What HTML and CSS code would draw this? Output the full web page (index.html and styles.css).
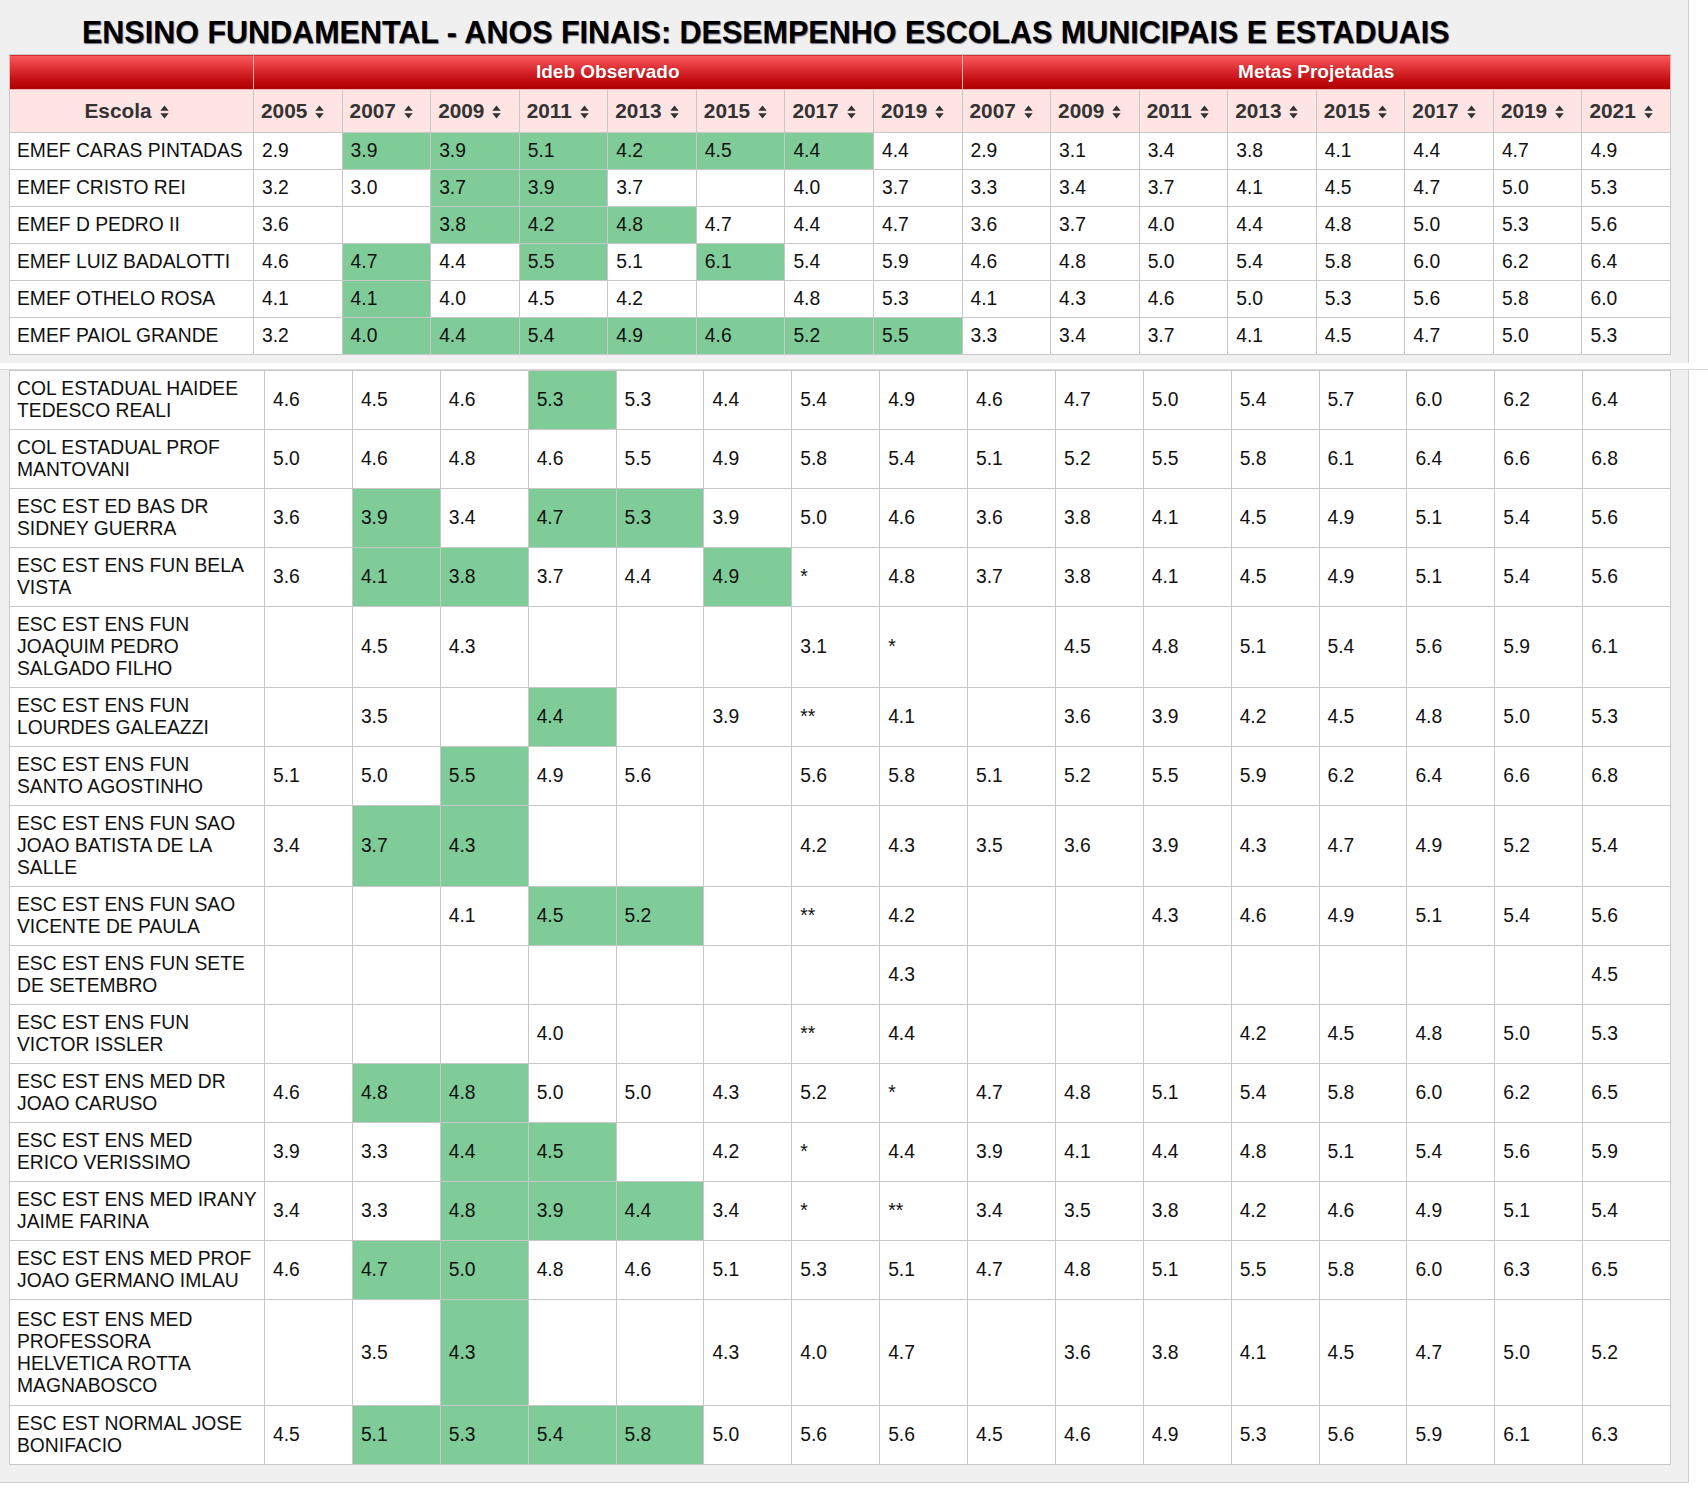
FILE: index.html
```html
<!DOCTYPE html>
<html lang="pt-BR">
<head>
<meta charset="utf-8">
<title>Ensino Fundamental - Anos Finais</title>
<link rel="stylesheet" href="styles.css">
</head>
<body>
<div class="panel panel-top">
  <h1 class="title">ENSINO FUNDAMENTAL - ANOS FINAIS: DESEMPENHO ESCOLAS MUNICIPAIS E ESTADUAIS</h1>
  <table class="grid grid-mun" id="mun">
    <colgroup><col class="c-name"></colgroup>
    <thead>
      <tr class="group-row">
        <th></th>
        <th colspan="8">Ideb Observado</th>
        <th colspan="8">Metas Projetadas</th>
      </tr>
      <tr class="sort-row" id="sortrow"></tr>
    </thead>
    <tbody id="munbody"></tbody>
  </table>
</div>
<div class="lower">
  <div class="panel panel-bottom">
    <table class="grid grid-est" id="est">
      <colgroup><col class="c-name"></colgroup>
      <tbody id="estbody"></tbody>
    </table>
  </div>
</div>
<script src="app.js"></script>
</body>
</html>
```

FILE: styles.css
```css
html, body {
  margin: 0;
  padding: 0;
  background: #ffffff;
}
body {
  font-family: "Liberation Sans", Arial, sans-serif;
  color: #111;
}
.panel {
  width: 1688px;
  background: #f0f0f0;
  border-right: 1px solid #cfcfcf;
  box-sizing: content-box;
}
.panel-top {
  padding: 0 0 8px 9px;
  width: 1679px;
}
.title {
  margin: 0 0 4px 73px;
  padding-top: 14px;
  font-size: 30.5px;
  line-height: 36px;
  font-weight: bold;
  color: #000;
  text-shadow: 0.7px 0.7px 1px rgba(0, 0, 40, 0.55);
  white-space: nowrap;
}
.lower {
  margin-top: 6px;
  border-top: 1px solid #d8d8d8;
}
.panel-bottom {
  padding: 0 0 17px 9px;
  width: 1679px;
  border-bottom: 1px solid #cfcfcf;
}
.grid {
  border-collapse: collapse;
  table-layout: fixed;
  width: 1662px;
  background: #fff;
}
.grid th, .grid td {
  border: 1px solid #c8c8c8;
  font-size: 19.3px;
  line-height: 22px;
  padding: 7px 8px;
  text-align: left;
  overflow: hidden;
}
.grid-mun .c-name { width: 244px; }
.grid-est .c-name { width: 255px; }
.grid td.name {
  padding: 7px 4px 7px 7px;
  white-space: nowrap;
}
.grid-est td {
  vertical-align: middle;
}
.grid-est tr.tall td {
  padding-top: 8.5px;
  padding-bottom: 8.5px;
}
.group-row th {
  background: linear-gradient(#f85a5e 0%, #e23338 35%, #c10a0e 75%, #ad0000 100%);
  color: #fff;
  font-size: 19px;
  font-weight: bold;
  text-align: center;
  padding: 6px 8px;
  border: 1px solid #e8b4b4;
  border-top-color: #cccccc;
  text-shadow: 0 0 1px rgba(90, 0, 0, 0.6);
}
.sort-row th {
  background: #ffe4e4;
  color: #333;
  font-size: 20.8px;
  font-weight: bold;
  padding: 10px 4px 10px 7px;
  white-space: nowrap;
}
.sort-row th.center {
  text-align: center;
  padding-left: 0;
  padding-right: 10px;
}
.sort-icon {
  display: inline-block;
  width: 9px;
  height: 14px;
  margin-left: 8px;
  vertical-align: -1px;
}
.hit {
  background: #80cc98;
}
```

FILE: app.js
```js
(function () {
  var years = ['2005','2007','2009','2011','2013','2015','2017','2019','2007','2009','2011','2013','2015','2017','2019','2021'];
  var icon = '<svg class="sort-icon" viewBox="0 0 9 14"><path d="M0.3 5.8 L4.5 0.4 L8.7 5.8 Z M0.3 8.2 L8.7 8.2 L4.5 13.6 Z" fill="#333"/></svg>';
  var sr = document.getElementById('sortrow');
  var h = '<th class="center">Escola' + icon + '</th>';
  years.forEach(function (y) { h += '<th>' + y + icon + '</th>'; });
  sr.innerHTML = h;

  // "|" = line break in the school name; trailing "g" = green cell
  var mun = [
    ['EMEF CARAS PINTADAS','2.9','3.9g','3.9g','5.1g','4.2g','4.5g','4.4g','4.4','2.9','3.1','3.4','3.8','4.1','4.4','4.7','4.9'],
    ['EMEF CRISTO REI','3.2','3.0','3.7g','3.9g','3.7','','4.0','3.7','3.3','3.4','3.7','4.1','4.5','4.7','5.0','5.3'],
    ['EMEF D PEDRO II','3.6','','3.8g','4.2g','4.8g','4.7','4.4','4.7','3.6','3.7','4.0','4.4','4.8','5.0','5.3','5.6'],
    ['EMEF LUIZ BADALOTTI','4.6','4.7g','4.4','5.5g','5.1','6.1g','5.4','5.9','4.6','4.8','5.0','5.4','5.8','6.0','6.2','6.4'],
    ['EMEF OTHELO ROSA','4.1','4.1g','4.0','4.5','4.2','','4.8','5.3','4.1','4.3','4.6','5.0','5.3','5.6','5.8','6.0'],
    ['EMEF PAIOL GRANDE','3.2','4.0g','4.4g','5.4g','4.9g','4.6g','5.2g','5.5g','3.3','3.4','3.7','4.1','4.5','4.7','5.0','5.3']
  ];
  var est = [
    ['COL ESTADUAL HAIDEE|TEDESCO REALI','4.6','4.5','4.6','5.3g','5.3','4.4','5.4','4.9','4.6','4.7','5.0','5.4','5.7','6.0','6.2','6.4'],
    ['COL ESTADUAL PROF|MANTOVANI','5.0','4.6','4.8','4.6','5.5','4.9','5.8','5.4','5.1','5.2','5.5','5.8','6.1','6.4','6.6','6.8'],
    ['ESC EST ED BAS DR|SIDNEY GUERRA','3.6','3.9g','3.4','4.7g','5.3g','3.9','5.0','4.6','3.6','3.8','4.1','4.5','4.9','5.1','5.4','5.6'],
    ['ESC EST ENS FUN BELA|VISTA','3.6','4.1g','3.8g','3.7','4.4','4.9g','*','4.8','3.7','3.8','4.1','4.5','4.9','5.1','5.4','5.6'],
    ['ESC EST ENS FUN|JOAQUIM PEDRO|SALGADO FILHO','','4.5','4.3','','','','3.1','*','','4.5','4.8','5.1','5.4','5.6','5.9','6.1'],
    ['ESC EST ENS FUN|LOURDES GALEAZZI','','3.5','','4.4g','','3.9','**','4.1','','3.6','3.9','4.2','4.5','4.8','5.0','5.3'],
    ['ESC EST ENS FUN|SANTO AGOSTINHO','5.1','5.0','5.5g','4.9','5.6','','5.6','5.8','5.1','5.2','5.5','5.9','6.2','6.4','6.6','6.8'],
    ['ESC EST ENS FUN SAO|JOAO BATISTA DE LA|SALLE','3.4','3.7g','4.3g','','','','4.2','4.3','3.5','3.6','3.9','4.3','4.7','4.9','5.2','5.4'],
    ['ESC EST ENS FUN SAO|VICENTE DE PAULA','','','4.1','4.5g','5.2g','','**','4.2','','','4.3','4.6','4.9','5.1','5.4','5.6'],
    ['ESC EST ENS FUN SETE|DE SETEMBRO','','','','','','','','4.3','','','','','','','','4.5'],
    ['ESC EST ENS FUN|VICTOR ISSLER','','','','4.0','','','**','4.4','','','','4.2','4.5','4.8','5.0','5.3'],
    ['ESC EST ENS MED DR|JOAO CARUSO','4.6','4.8g','4.8g','5.0','5.0','4.3','5.2','*','4.7','4.8','5.1','5.4','5.8','6.0','6.2','6.5'],
    ['ESC EST ENS MED|ERICO VERISSIMO','3.9','3.3','4.4g','4.5g','','4.2','*','4.4','3.9','4.1','4.4','4.8','5.1','5.4','5.6','5.9'],
    ['ESC EST ENS MED IRANY|JAIME FARINA','3.4','3.3','4.8g','3.9g','4.4g','3.4','*','**','3.4','3.5','3.8','4.2','4.6','4.9','5.1','5.4'],
    ['ESC EST ENS MED PROF|JOAO GERMANO IMLAU','4.6','4.7g','5.0g','4.8','4.6','5.1','5.3','5.1','4.7','4.8','5.1','5.5','5.8','6.0','6.3','6.5'],
    ['ESC EST ENS MED|PROFESSORA|HELVETICA ROTTA|MAGNABOSCO','','3.5','4.3g','','','4.3','4.0','4.7','','3.6','3.8','4.1','4.5','4.7','5.0','5.2'],
    ['ESC EST NORMAL JOSE|BONIFACIO','4.5','5.1g','5.3g','5.4g','5.8g','5.0','5.6','5.6','4.5','4.6','4.9','5.3','5.6','5.9','6.1','6.3']
  ];

  function rows(data) {
    return data.map(function (r) {
      var lines = r[0].split('|');
      var cls = lines.length >= 4 ? ' class="tall"' : '';
      var s = '<tr' + cls + '><td class="name">' + lines.join('<br>') + '</td>';
      for (var i = 1; i < r.length; i++) {
        var v = r[i];
        var c = '';
        if (v.slice(-1) === 'g') { v = v.slice(0, -1); c = ' class="hit"'; }
        s += '<td' + c + '>' + v + '</td>';
      }
      return s + '</tr>';
    }).join('');
  }
  document.getElementById('munbody').innerHTML = rows(mun);
  document.getElementById('estbody').innerHTML = rows(est);
})();
```
